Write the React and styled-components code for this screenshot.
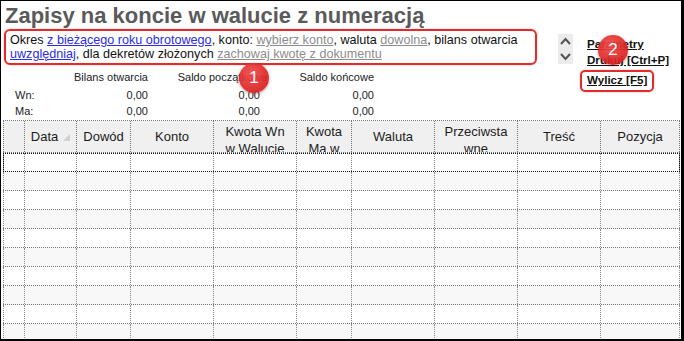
import React from 'react'
import styled, { createGlobalStyle } from 'styled-components'

const GlobalStyle = createGlobalStyle`
  html, body {
    margin: 0;
    padding: 0;
    background: #ffffff;
  }
  body {
    font-family: "Liberation Sans", Arial, sans-serif;
  }
`

const COLS = [22, 52, 54, 83, 83, 55, 83, 83, 83, 79]
const TEMPLATE = COLS.map((w) => `${w}px`).join(' ')

const HEADERS = [
  { key: 'rh', label: '' },
  { key: 'data', label: 'Data', sort: true },
  { key: 'dowod', label: 'Dowód' },
  { key: 'konto', label: 'Konto' },
  { key: 'wn', label: ['Kwota Wn', 'w Walucie'] },
  { key: 'ma', label: ['Kwota', 'Ma w'] },
  { key: 'waluta', label: 'Waluta' },
  { key: 'przec', label: ['Przeciwsta', 'wne'] },
  { key: 'tresc', label: 'Treść' },
  { key: 'poz', label: 'Pozycja' },
]

const ROWS = Array.from({ length: 10 }, (_, i) => i)

function App() {
  return (
    <>
      <GlobalStyle />
      <Frame>
        <Title>Zapisy na koncie w walucie z numeracją</Title>
        <Top>
          <LeftCol>
            <FilterBox>
              Okres <Link>z bieżącego roku obrotowego</Link>, konto: <Link muted>wybierz konto</Link>, waluta{' '}
              <Link muted>dowolna</Link>, bilans otwarcia <Link>uwzględniaj</Link>, dla dekretów złożonych{' '}
              <Link muted>zachowaj kwotę z dokumentu</Link>
            </FilterBox>
            <Summary>
              <SumHead />
              <SumHead>Bilans otwarcia</SumHead>
              <SumHead overflow>Saldo początkowe</SumHead>
              <SumHead>Saldo końcowe</SumHead>
              <SumLabel>Wn:</SumLabel>
              <SumValue>0,00</SumValue>
              <SumValue>0,00</SumValue>
              <SumValue>0,00</SumValue>
              <SumLabel>Ma:</SumLabel>
              <SumValue>0,00</SumValue>
              <SumValue>0,00</SumValue>
              <SumValue>0,00</SumValue>
            </Summary>
          </LeftCol>
          <Scroller>
            <svg width="15" height="30" viewBox="0 0 15 30">
              <path d="M3 10 L7.5 5 L12 10" fill="none" stroke="#555" strokeWidth="2" />
              <path d="M3 20 L7.5 25 L12 20" fill="none" stroke="#555" strokeWidth="2" />
            </svg>
          </Scroller>
          <Actions>
            <Action>Parametry</Action>
            <Action>Drukuj [Ctrl+P]</Action>
            <Action boxed>Wylicz [F5]</Action>
          </Actions>
        </Top>
        <Table>
          <HeadRow>
            {HEADERS.map((h) => (
              <HeadCell key={h.key} wrapped={Array.isArray(h.label)}>
                {Array.isArray(h.label) ? (
                  <span>
                    {h.label[0]}
                    <br />
                    {h.label[1]}
                  </span>
                ) : (
                  h.label
                )}
                {h.sort && (
                  <SortMark width="7" height="7" viewBox="0 0 7 7">
                    <path d="M0 7 L7 7 L7 0 Z" fill="#cfcfcf" />
                  </SortMark>
                )}
              </HeadCell>
            ))}
          </HeadRow>
          {ROWS.map((r) => (
            <Row key={r} shaded={r % 2 === 1} focused={r === 0}>
              {COLS.map((_, c) => (
                <Cell key={c} />
              ))}
            </Row>
          ))}
        </Table>
        <Badge style={{ left: 238, top: 62 }}>1</Badge>
        <Badge style={{ left: 597, top: 34 }}>2</Badge>
      </Frame>
    </>
  )
}

export default App

const Frame = styled.div`
position: relative;
box-sizing: border-box;
width: 684px;
height: 341px;
overflow: hidden;
border: 1px solid #000;
border-right-width: 3px;
border-bottom-width: 2px;
background: #fff;
`

const Title = styled.h1`
margin: 0 0 0 4px;
padding-top: 2px;
height: 26px;
font-size: 22px;
line-height: 25px;
font-weight: bold;
color: #5a5a5a;
white-space: nowrap;
`

const Top = styled.div`
display: flex;
align-items: flex-start;
`

const LeftCol = styled.div`
margin-left: 3px;
width: 533px;
`

const FilterBox = styled.div`
box-sizing: border-box;
height: 36px;
border: 2px solid #e32b2b;
border-radius: 6px;
padding: 2px 3px 1px 4px;
font-size: 12.6px;
line-height: 14px;
color: #111;
box-shadow: 0 0 2px rgba(200, 0, 0, 0.35);
`

const Link = styled.span`
color: ${(p) => (p.muted ? '#8c8c8c' : '#2b2bf0')};
text-decoration: underline;
`

const Summary = styled.div`
display: grid;
grid-template-columns: 50px 83px 112px 114px;
padding-left: 11px;
margin-top: 4px;
font-size: 11px;
line-height: 16px;
color: #222;
`

const SumHead = styled.div`
text-align: right;
padding-bottom: 2px;
white-space: nowrap;
margin-right: ${(p) => (p.overflow ? '-7px' : '0')};
`

const SumLabel = styled.div`
text-align: left;
`

const SumValue = styled.div`
text-align: right;
`

const Scroller = styled.div`
margin: 5px 0 0 21px;
width: 15px;
height: 30px;
background: #ececec;
svg { display: block; }
`

const Actions = styled.div`
display: flex;
flex-direction: column;
align-items: flex-start;
margin: 7px 0 0 14px;
`

const Action = styled.div`
font-size: 11.6px;
line-height: 16px;
font-weight: bold;
color: #111;
text-decoration: underline;
white-space: nowrap;
${(p) =>
  p.boxed &&
  `
  margin: 2px 0 0 -7px;
  padding: 0 5px 2px;
  border: 2px solid #e32b2b;
  border-radius: 5px;
  box-shadow: 0 0 2px rgba(200, 0, 0, 0.35);
  `}
`

const Table = styled.div`
margin: 1px 0 0 2px;
width: 677px;
border-top: 1px dotted #777;
border-left: 1px dotted #777;
box-sizing: border-box;
`

const HeadRow = styled.div`
display: grid;
grid-template-columns: ${TEMPLATE};
height: 31px;
background: #f0f0f0;
border-bottom: 1px dotted #777;
margin-left: -1px;
`

const HeadCell = styled.div`
display: flex;
justify-content: center;
align-items: ${(p) => (p.wrapped ? 'flex-start' : 'center')};
padding-top: ${(p) => (p.wrapped ? '2px' : '0')};
box-sizing: border-box;
overflow: hidden;
border-right: 1px dotted #777;
font-size: 13px;
line-height: 17px;
color: #1c1c1c;
text-align: center;
white-space: nowrap;
&:first-child { border-left: 1px dotted #777; }
`

const SortMark = styled.svg`
margin-left: 5px;
margin-top: 2px;
`

const Row = styled.div`
display: grid;
grid-template-columns: ${TEMPLATE};
height: 19px;
box-sizing: border-box;
margin-left: -1px;
background: ${(p) => (p.shaded ? '#f8f8f8' : '#fff')};
border-bottom: 1px dotted #777;
outline: ${(p) => (p.focused ? '1px dotted #111' : 'none')};
outline-offset: -1px;
`

const Cell = styled.div`
border-right: 1px dotted #8a8a8a;
&:first-child { border-left: 1px dotted #8a8a8a; }
`

const Badge = styled.div`
position: absolute;
width: 30px;
height: 30px;
border-radius: 50%;
background: radial-gradient(circle at 40% 35%, #f04a4a 0%, #dd2525 60%, #c81818 100%);
box-shadow: 0 1px 3px rgba(120, 0, 0, 0.45);
color: #fff;
font-family: "Liberation Sans", Arial, sans-serif;
font-size: 17px;
line-height: 30px;
text-align: center;
opacity: 0.92;
`
